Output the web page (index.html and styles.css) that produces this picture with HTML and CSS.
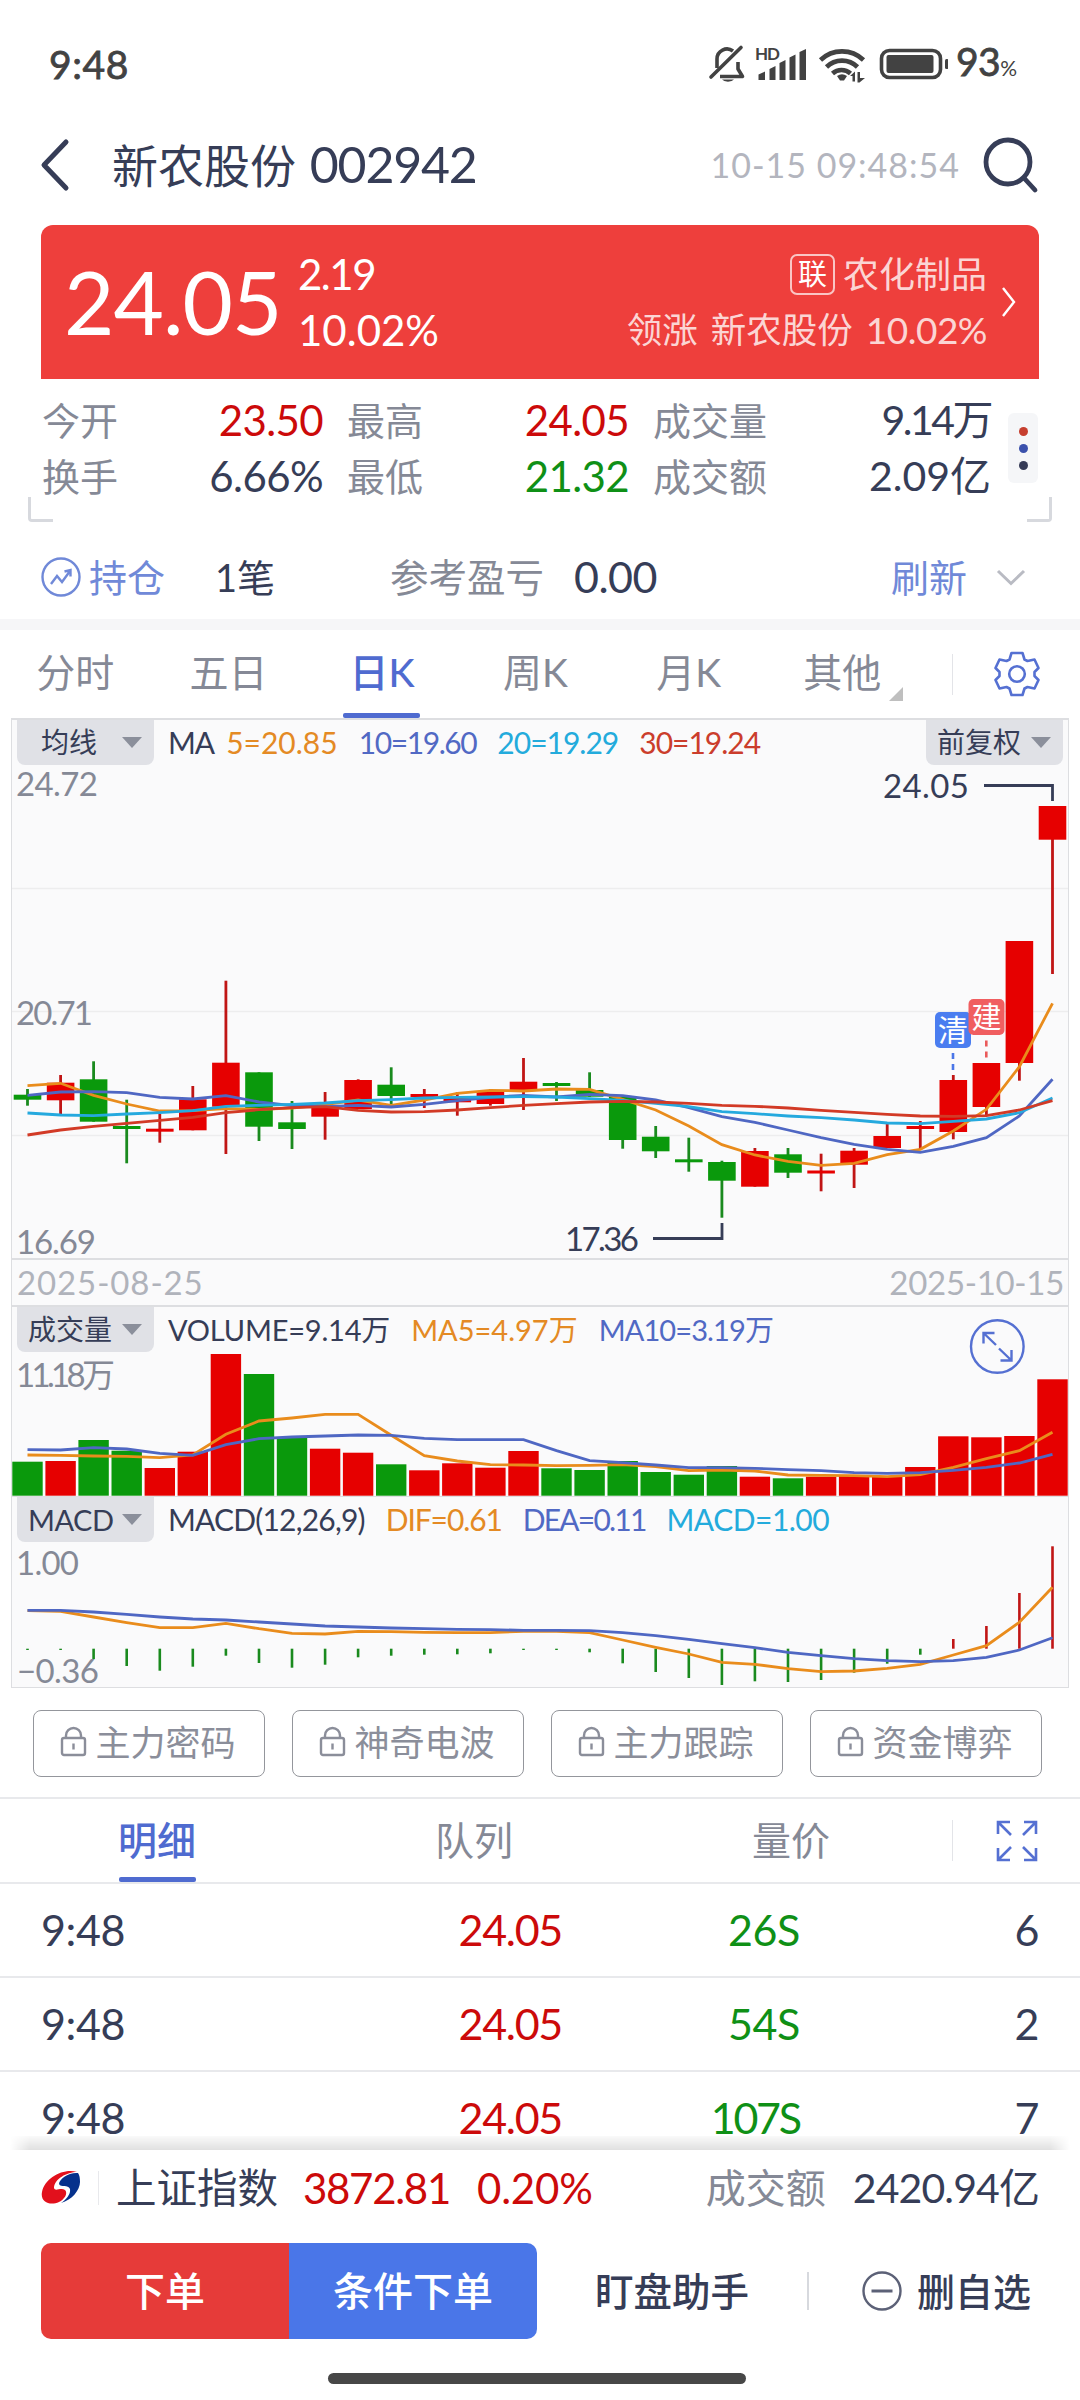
FILE: index.html
```html
<!DOCTYPE html>
<html lang="zh-CN">
<head>
    <meta charset="UTF-8">
    <meta name="viewport" content="width=device-width, initial-scale=1.0">
    <title>新农股份 002942</title>
    <link rel="stylesheet" href="styles.css">
</head>
<body>

<div class="status-bar">
    <span class="clock">9:48</span>
    <svg class="status-icons" width="240" height="44" viewBox="708 42 240 44">
        <g fill="none" stroke="#424242" stroke-width="3.6" stroke-linejoin="round">
            <path d="M717 68V59a10 10 0 0 1 16-8M738 62v7l4.500 7.500H720"/>
            <path d="M711 77L741 47.500" stroke-linecap="round"/>
        </g>
        <path d="M722 79.500h12a6.500 3.500 0 0 1-12 0z" fill="#424242"/>
        <text class="hd" x="755" y="60" textLength="25">HD</text>
        <path fill="#424242" d="M758.500 80v-5.500l6.500-3v8.500zM769.500 80V69l6-3v14zM779.500 80V63l6-3v20zM789.500 80V57.500l6-3V80zM799.500 80V52l6.500-3v31z"/>
        <g fill="none" stroke="#424242" stroke-width="4.600">
            <path d="M820.500 60a31 31 0 0 1 43 0"/>
            <path d="M826.500 67a22 22 0 0 1 31 0"/>
            <path d="M832.500 73.500a13.500 13.500 0 0 1 18 0"/>
        </g>
        <path d="M837 76q5-3.500 10 0l-3 4.500h-4z" fill="#424242"/>
        <path d="M850 76l5-4.500v10h-2.500V76zM857.500 72h2.500v6h5l-5.500 4.500-2 0z" fill="#424242"/>
        <rect x="881.500" y="50.500" width="59" height="27" rx="8" fill="none" stroke="#424242" stroke-width="3.600"/>
        <rect x="886.500" y="55" width="47" height="18" rx="2" fill="#424242"/>
        <rect x="945" y="59" width="3.500" height="10" rx="1.500" fill="#424242"/>
    </svg>
    <span class="battery">93<small>%</small></span>
</div>

<div class="header">
    <svg class="back" width="32" height="54" viewBox="0 0 32 54"><path d="M26 4L4 27L26 50" fill="none" stroke="#363d57" stroke-width="5" stroke-linecap="round" stroke-linejoin="round"/></svg>
    <h1>新农股份 <span>002942</span></h1>
    <span class="time">10-15 09:48:54</span>
    <svg class="search" width="58" height="58" viewBox="0 0 58 58" fill="none" stroke="#363d57" stroke-width="4.800" stroke-linecap="round"><circle cx="27" cy="26" r="22"/><path d="M43 42L54 54"/></svg>
</div>

<!-- 行情卡片 -->
<div class="quote">
    <div class="price">24.05</div>
    <div class="change">
        <div class="c1">2.19</div>
        <div>10.02%</div>
    </div>
    <div class="sector">
        <div class="line"><span class="tag">联</span>农化制品</div>
        <div class="line l2"><span>领涨</span><span>新农股份</span><span class="pct">10.02%</span></div>
    </div>
    <svg width="16" height="32" viewBox="0 0 16 32"><path d="M2 2L13 16L2 30" fill="none" stroke="#fff" stroke-width="2.400"/></svg>
</div>

<div class="stats">
    <div class="grid">
        <span>今开</span><b class="red">23.50</b><span>最高</span><b class="red">24.05</b><span>成交量</span><b class="n914">9.14万</b>
        <span>换手</span><b>6.66%</b><span>最低</span><b class="green">21.32</b><span>成交额</span><b>2.09亿</b>
    </div>
    <div class="dots"><i></i><i></i><i></i></div>
</div>
<div class="brackets"><i></i><i></i></div>

<div class="position">
    <svg width="40" height="40" viewBox="0 0 40 40" fill="none" stroke="#7089d8" stroke-width="2.400"><circle cx="20" cy="20" r="18.500"/><path d="M10 27l6-8 5 6 8-11M23.500 14.500l6-1.500v6.500"/></svg>
    <span class="blue">持仓</span>
    <span class="count">1笔</span>
    <span class="label">参考盈亏</span>
    <span class="num">0.00</span>
    <span class="blue refresh">刷新</span>
    <svg width="30" height="18" viewBox="0 0 30 18"><path d="M2 3L15 15.500L28 3" fill="none" stroke="#b9bbc3" stroke-width="3"/></svg>
</div>

<div class="tabs">
    <div class="tab">分时</div>
    <div class="tab">五日</div>
    <div class="tab active">日K</div>
    <div class="tab">周K</div>
    <div class="tab">月K</div>
    <div class="tab more">其他</div>
    <div class="tool">
        <svg width="48" height="48" viewBox="-24 -24 48 48" fill="none" stroke="#5570d2" stroke-width="2.600" stroke-linejoin="round"><circle r="7.800"/><path d="M-5.500 -21H5.500L7.500 -14.500L10.500 -13L17.500 -14.500L21.500 -6L17.500 -2V2L21.500 6L17.500 14.500L10.500 13L7.500 14.500L5.500 21H-5.500L-7.500 14.500L-10.500 13L-17.500 14.500L-21.500 6L-17.500 2V-2L-21.500 -6L-17.500 -14.500L-10.500 -13L-7.500 -14.500Z"/></svg>
    </div>
</div>

<!-- K线 / 成交量 / MACD -->
<div class="chart">
    <div class="pane k-pane">
        <svg id="kline" viewBox="12 720 1056 538"></svg>
        <div class="bar">
            <div class="pill">均线</div>
            <div class="legend ma"><span>MA</span><span class="c5">5=20.85</span><span class="c10">10=19.60</span><span class="c20">20=19.29</span><span class="c30">30=19.24</span></div>
            <div class="pill right">前复权</div>
        </div>
    </div>
    <div class="dates"><span>2025-08-25</span><span class="end">2025-10-15</span></div>
    <div class="pane v-pane">
        <svg id="volume" viewBox="12 1307 1056 190"></svg>
        <div class="bar">
            <div class="pill">成交量</div>
            <div class="legend vol"><span>VOLUME=9.14万</span><span class="c5">MA5=4.97万</span><span class="c10">MA10=3.19万</span></div>
        </div>
    </div>
    <div class="pane m-pane">
        <svg id="macd" viewBox="12 1497 1056 190"></svg>
        <div class="bar">
            <div class="pill latin">MACD</div>
            <div class="legend macd"><span>MACD(12,26,9)</span><span class="c5">DIF=0.61</span><span class="c10">DEA=0.11</span><span class="c20">MACD=1.00</span></div>
        </div>
    </div>
</div>

<svg width="0" height="0" class="defs">
    <symbol id="lock" viewBox="0 0 28 32"><g fill="none" stroke="#8b8e9a" stroke-width="2.400"><rect x="2" y="12" width="23" height="17" rx="2"/><path d="M6 12V9.500a7.500 7.500 0 0 1 15 0V12M13.500 17.500v6"/></g></symbol>
</svg>
<div class="locks">
    <div class="lock"><svg><use href="#lock"/></svg>主力密码</div>
    <div class="lock"><svg><use href="#lock"/></svg>神奇电波</div>
    <div class="lock"><svg><use href="#lock"/></svg>主力跟踪</div>
    <div class="lock"><svg><use href="#lock"/></svg>资金博弈</div>
</div>

<div class="tabs detail-tabs">
    <div class="tab active">明细</div>
    <div class="tab">队列</div>
    <div class="tab">量价</div>
    <div class="tool">
        <svg width="42" height="42" viewBox="0 0 42 42" fill="none" stroke="#5570d2" stroke-width="2.600"><path d="M2 14V2h12M2 2l13 13M28 2h12v12M40 2L27 15M2 28v12h12M2 40l13-13M40 28v12H28M40 40L27 27"/></svg>
    </div>
</div>

<div class="ticks">
    <div class="tick"><span>9:48</span><span class="red">24.05</span><span class="green">26S</span><span>6</span></div>
    <div class="tick"><span>9:48</span><span class="red">24.05</span><span class="green">54S</span><span>2</span></div>
    <div class="tick"><span>9:48</span><span class="red">24.05</span><span class="green n107">107S</span><span>7</span></div>
</div>

<div class="footer">
    <div class="index">
        <svg width="40" height="36" viewBox="0 0 40 36">
            <path d="M36 2C22-2 4 8 1 22C-1 32 9 36 18 32C24 29 27 23 24 20C20 17 14 22 13 18C13 9 26 2 36 2Z" fill="#e2101c"/>
            <path d="M37 3C28 2 18 9 18 14C20 18 27 14 29 19C30 24 25 30 20 33C31 30 39 20 39 12C39 8 38.500 5 37 3Z" fill="#06318c"/>
        </svg>
        <span class="name">上证指数</span>
        <span class="red idx">3872.81</span>
        <span class="red rate">0.20%</span>
        <span class="label">成交额</span>
        <span class="amount">2420.94亿</span>
    </div>
    <div class="actions">
        <button class="buy">下单</button>
        <button class="cond">条件下单</button>
        <span class="helper">盯盘助手</span>
        <span class="remove"><svg width="40" height="40" viewBox="0 0 40 40" fill="none" stroke="#5c6177" stroke-width="2.400"><circle cx="20" cy="20" r="18.500"/><path d="M9.500 20h21" stroke-width="3"/></svg>删自选</span>
    </div>
    <div class="home"></div>
</div>

<script src="script.js"></script>
</body>
</html>
```

FILE: styles.css
```css
* {
    box-sizing: border-box;
    margin: 0;
    padding: 0;
}

body {
    width: 1080px;
    height: 2400px;
    overflow: hidden;
    display: flex;
    flex-direction: column;
    background-color: #ffffff;
    font-family: Lato, "Noto Sans CJK SC", sans-serif;
    font-size: 38px;
    line-height: 56px;
    color: #363d57;
    white-space: nowrap;
}

svg {
    display: block;
    flex: none;
}

.red {
    color: #cc0a0a;
}

.green {
    color: #0f9016;
}

/* 状态栏 */
.status-bar {
    height: 128px;
    padding: 0 61px 0 49px;
    display: flex;
    align-items: center;
    color: #424242;
}

.clock {
    font-size: 39px;
    letter-spacing: 0.6px;
    -webkit-text-stroke: 0.8px #424242;
}

.status-icons {
    margin-left: auto;
}

.hd {
    font: bold 17px Lato, sans-serif;
    fill: #424242;
}

.battery {
    width: 63px;
    margin-left: 8px;
    font-size: 39px;
    letter-spacing: -0.5px;
    -webkit-text-stroke: 0.8px #424242;
}

.battery small {
    font-size: 21px;
    -webkit-text-stroke: 0;
}

/* 标题栏 */
.header {
    height: 74px;
    padding: 0 41px 0 40px;
    display: flex;
    align-items: center;
}

.header h1 {
    margin-left: 40px;
    font-size: 46px;
    font-weight: 400;
}

.header h1 span {
    font-size: 50px;
    letter-spacing: -1.2px;
    margin-left: 2px;
}

.header .time {
    margin-left: auto;
    font-size: 34px;
    letter-spacing: 1px;
    color: #b3b5be;
}

.header .search {
    margin-left: 21px;
}

/* 行情卡片 */
.quote {
    margin: 23px 41px 0;
    height: 154px;
    padding: 0 22px 0 23px;
    display: flex;
    align-items: center;
    border-radius: 12px 12px 0 0;
    background-color: #ee3f3c;
    color: #ffffff;
}

.price {
    width: 234px;
    font-size: 87px;
    line-height: 100px;
    letter-spacing: -1px;
}

.change {
    font-size: 42px;
}

.change .c1 {
    letter-spacing: -1.5px;
}

.sector {
    margin-left: auto;
    margin-right: 14px;
    font-size: 36px;
    color: rgba(255, 255, 255, 0.8);
}

.line {
    display: flex;
    justify-content: flex-end;
    align-items: center;
    height: 56px;
}

.l2 {
    gap: 13px;
    font-size: 35.500px;
}

.pct {
    font-size: 37px;
    letter-spacing: -0.5px;
}

.tag {
    width: 45px;
    height: 41px;
    margin-right: 8px;
    border: 2px solid #fac5c4;
    border-radius: 7px;
    font-size: 29px;
    line-height: 36px;
    text-align: center;
    color: #ffffff;
}

/* 指标 */
.stats {
    padding: 13px 42px 0;
    height: 118px;
    display: flex;
}

.grid {
    display: grid;
    grid-template-columns: 120px 161px 144px 162px 129px 233px;
    grid-auto-rows: 56px;
    color: #858996;
}

.grid b {
    font-size: 42px;
    font-weight: 400;
    letter-spacing: -0.600px;
    color: #363d57;
    text-align: right;
}

.grid span:nth-child(6n + 3),
.grid span:nth-child(6n + 5) {
    padding-left: 24px;
}

.grid b:nth-child(6n) {
    font-size: 41px;
    letter-spacing: 0;
}

.grid .red {
    color: #cc0a0a;
}

.grid .green {
    color: #0f9016;
}

.grid b.n914 {
    letter-spacing: -2.500px;
    padding-right: 0;
}

.dots {
    width: 30px;
    height: 70px;
    margin-top: 21px;
    margin-left: 17px;
    display: flex;
    flex-direction: column;
    align-items: center;
    justify-content: center;
    gap: 8px;
    border-radius: 6px;
    background-color: #f5f6f8;
}

.dots i {
    width: 9px;
    height: 9px;
    border-radius: 50%;
    background-color: #c63f2f;
}

.dots i:nth-child(2) {
    background-color: #3b51ac;
}

.dots i:nth-child(3) {
    background-color: #363b57;
}

.brackets {
    display: flex;
    justify-content: space-between;
    padding: 0 28px;
}

.brackets i {
    width: 25px;
    height: 25px;
    border: 3px solid #d7d9de;
    border-top: 0;
    border-right: 0;
    border-bottom-left-radius: 4px;
}

.brackets i:last-child {
    transform: scaleX(-1);
}

/* 持仓 */
.position {
    height: 108px;
    padding: 12px 54px 0 41px;
    display: flex;
    align-items: center;
    border-bottom: 11px solid #f6f6f8;
}

.position .blue {
    color: #7089d8;
    margin-left: 8px;
}

.position .count {
    width: 175px;
    margin-left: 50px;
}

.position .label {
    font-size: 38.500px;
    color: #858996;
}

.position .num {
    margin-left: 30px;
    font-size: 43px;
    letter-spacing: -0.5px;
}

.position .refresh {
    margin-left: auto;
    margin-right: 29px;
}

/* 周期切换 */
.tabs {
    position: relative;
    height: 88px;
    display: flex;
    line-height: 85px;
    font-size: 39px;
    color: #858996;
}

.tab {
    width: 153.400px;
    padding-right: 3px;
    text-align: center;
    position: relative;
}

.tab.active {
    color: #4f6bd0;
    font-weight: 500;
}

.tab.active::after {
    content: "";
    position: absolute;
    left: 50%;
    bottom: 0;
    width: 77px;
    height: 5px;
    margin-left: -40px;
    border-radius: 2px;
    background-color: #4f6bd0;
}

.tab.more::after {
    content: "";
    position: absolute;
    right: 17px;
    bottom: 17px;
    border-left: 14px solid transparent;
    border-bottom: 14px solid #bfbfbf;
}

.tool {
    flex: 1;
    display: flex;
    align-items: center;
    justify-content: flex-end;
    padding-right: 39px;
}

.tool::before {
    content: "";
    width: 1px;
    height: 41px;
    margin-right: 40px;
    background-color: #e3e4e8;
}

/* 图表 */
.chart {
    margin: 0 11px;
    border: 1px solid #dddee1;
    border-top: 2px solid #dddee1;
    background-color: #fafafb;
}

.pane {
    position: relative;
}

.pane > svg {
    position: absolute;
    left: 0;
    top: 0;
    width: 100%;
    height: 100%;
    overflow: visible;
}

.k-pane {
    height: 538px;
}

.v-pane,
.m-pane {
    height: 190px;
}

.bar {
    position: relative;
    height: 45px;
    padding: 0 5px;
    display: flex;
}

.pill {
    width: 137px;
    padding: 0 12px 0 11px;
    display: flex;
    align-items: center;
    justify-content: space-between;
    border-radius: 0 0 8px 8px;
    background-color: #e0e1e6;
    font-size: 28px;
    line-height: 43px;
}

.k-pane .pill:first-child {
    padding-left: 24px;
}

.pill.latin {
    font-size: 29px;
    letter-spacing: -0.500px;
}

.pill::after {
    content: "";
    border: 10.500px solid transparent;
    border-top: 11px solid #8b8f9b;
    border-bottom: 0;
}

.pill.right {
    margin-left: auto;
}

.legend {
    display: flex;
    gap: 21px;
    margin-left: 14px;
    line-height: 45px;
    font-size: 30px;
}

.legend.ma {
    line-height: 44px;
}

.legend.ma span:first-child {
    letter-spacing: -1px;
    margin-right: -9px;
}

.ma .c10 {
    letter-spacing: -1.400px;
}

.ma .c20,
.ma .c30 {
    letter-spacing: -1px;
}

.legend.vol {
    font-size: 29px;
    letter-spacing: -0.200px;
}

.vol .c5 {
    letter-spacing: 0;
}

.vol .c10 {
    letter-spacing: -0.900px;
}

.legend.macd {
    letter-spacing: -0.800px;
}

.macd .c5 {
    letter-spacing: -1.100px;
}

.macd .c10 {
    letter-spacing: -1.800px;
}

.macd .c20 {
    letter-spacing: -0.500px;
}

.c5 {
    color: #e48a24;
}

.c10 {
    color: #5169c4;
}

.c20 {
    color: #23abdc;
}

.c30 {
    color: #cb3d2c;
}

.dates {
    height: 49px;
    padding: 0 4px 0 5px;
    display: flex;
    justify-content: space-between;
    border-top: 2px solid #dddee1;
    border-bottom: 2px solid #dddee1;
    font-size: 33px;
    line-height: 45px;
    letter-spacing: 0.900px;
    color: #b0b3bb;
}

.dates .end {
    letter-spacing: -0.300px;
}

.axis {
    font-size: 33px;
    fill: #858996;
}

.mark {
    font-size: 33px;
    fill: #363d57;
}

.badge {
    font-size: 30px;
    fill: #ffffff;
    text-anchor: middle;
}

/* 主力工具 */
.defs {
    position: absolute;
}

.locks {
    height: 111px;
    padding: 22px 38px 0 33px;
    display: flex;
    justify-content: space-between;
    border-bottom: 2px solid #e8e9ec;
}

.lock {
    width: 232px;
    height: 67px;
    padding: 0 2px 3px 0;
    display: flex;
    align-items: center;
    justify-content: center;
    gap: 7px;
    border: 1.500px solid #94969c;
    border-radius: 8px;
    font-size: 35px;
    color: #8b8e9a;
}

.lock svg {
    width: 28px;
    height: 32px;
}

/* 成交明细 */
.detail-tabs {
    height: 85px;
    line-height: 82px;
    border-bottom: 2px solid #e8e9ec;
}

.detail-tabs .tab {
    width: 317px;
}

.detail-tabs .tool {
    padding-right: 42px;
}

.detail-tabs .tool::before {
    margin-right: 43px;
}

.tick {
    height: 94px;
    padding: 0 41px;
    display: grid;
    grid-template-columns: 260px 261px 238px 1fr;
    align-items: center;
    border-bottom: 2px solid #e8e9ec;
    font-size: 43px;
    letter-spacing: -0.400px;
}

.tick .red {
    letter-spacing: -1.300px;
}

.tick .n107 {
    letter-spacing: -2.200px;
}

.tick span + span {
    text-align: right;
}

/* 底部 */
.footer {
    position: absolute;
    top: 2150px;
    width: 1080px;
    height: 250px;
    background-color: #ffffff;
}

.footer::before {
    content: "";
    position: absolute;
    left: 10px;
    right: 10px;
    top: -14px;
    height: 14px;
    background: linear-gradient(rgba(0, 0, 0, 0.02), rgba(0, 0, 0, 0.12));
    -webkit-mask-image: linear-gradient(to right, transparent, #000 20px, #000 1040px, transparent);
    mask-image: linear-gradient(to right, transparent, #000 20px, #000 1040px, transparent);
}

.index {
    height: 76px;
    padding: 0 41px;
    display: flex;
    align-items: center;
    font-size: 42px;
}

.index .name {
    margin-left: 17px;
    padding-left: 17px;
    border-left: 1px solid #e8e9ec;
    font-size: 40.500px;
    line-height: 34px;
}

.index .idx {
    margin-left: 25px;
    letter-spacing: -1.300px;
}

.index .rate {
    margin-left: 27px;
    letter-spacing: -0.200px;
}

.index .label {
    margin-left: auto;
    font-size: 40px;
    color: #858996;
}

.index .amount {
    margin-left: 27px;
    font-size: 41px;
    letter-spacing: -0.900px;
}

.actions {
    margin-top: 17px;
    padding: 0 49px 0 41px;
    height: 96px;
    display: flex;
    align-items: center;
}

.actions button {
    flex: none;
    width: 248px;
    height: 96px;
    padding-bottom: 5px;
    border: none;
    border-radius: 10px 0 0 10px;
    background-color: #e63b39;
    color: #ffffff;
    font: 500 40px Lato, "Noto Sans CJK SC", sans-serif;
}

.actions .cond {
    border-radius: 0 10px 10px 0;
    background-color: #4a76e8;
}

.helper {
    width: 214px;
    margin-left: 58px;
    line-height: 38px;
    font-size: 38.500px;
    border-right: 2px solid #d7d9de;
}

.actions .helper,
.remove {
    font-weight: 500;
}

.remove {
    margin-left: auto;
    display: flex;
    align-items: center;
    gap: 15px;
    line-height: 50px;
}

.home {
    width: 418px;
    height: 11px;
    margin: 34px 0 0 328px;
    border-radius: 6px;
    background-color: #474747;
}
```

FILE: script.js
```js
const STEP = 33.065;
const X0 = 27.5;
const RED = '#e60000';
const GREEN = '#0a990c';
const WICK_RED = '#c01515';
const WICK_GREEN = '#1a8a1e';

const kline = document.getElementById('kline');
const volume = document.getElementById('volume');
const macd = document.getElementById('macd');

// 颜色, 实体上, 实体下, 最高, 最低
const candles = [
    ['g', 1094.7, 1099.7, 1089, 1105.7], ['r', 1082.7, 1100.3, 1075, 1114],
    ['g', 1079.3, 1121.7, 1061.3, 1121.7], ['g', 1126, 1129, 1099.7, 1163.3],
    ['r', 1128.7, 1131.7, 1114, 1142.7], ['r', 1099.3, 1130.3, 1086, 1130.3],
    ['r', 1062.7, 1106.7, 980.7, 1154], ['g', 1072.3, 1126.7, 1072.3, 1141],
    ['g', 1122.3, 1129, 1101, 1149], ['r', 1107.3, 1116.7, 1092, 1139.7],
    ['r', 1080, 1109, 1079.3, 1109], ['g', 1084.7, 1096, 1067.3, 1105],
    ['r', 1094, 1097, 1089, 1108], ['r', 1096.7, 1102.3, 1092.3, 1115.7],
    ['r', 1091, 1104, 1089.3, 1105.7], ['r', 1081.7, 1090, 1058, 1110],
    ['g', 1083, 1086, 1082, 1101], ['g', 1090, 1096.7, 1072.3, 1096.7],
    ['g', 1096.7, 1140, 1096.7, 1148.7], ['g', 1136.7, 1151.3, 1126, 1158],
    ['g', 1159.3, 1162.3, 1137.7, 1171.7], ['g', 1162, 1180.7, 1160.7, 1217.7],
    ['r', 1151, 1186.7, 1148, 1186.7], ['g', 1154.3, 1172.7, 1148, 1178],
    ['r', 1170.5, 1173.5, 1153.7, 1191.3], ['r', 1150.7, 1164.7, 1148, 1188],
    ['r', 1136, 1148, 1123.3, 1148], ['r', 1126, 1129, 1121, 1150],
    ['r', 1080, 1132, 1075, 1139.3], ['r', 1063, 1107, 1063, 1116],
    ['r', 941, 1063, 941, 1080.7], ['r', 806, 839.7, 806, 974]
];

const ma5 = [1085.7, 1083.3, 1095.3, 1104, 1111, 1110.7, 1108.7, 1109.3, 1108, 1104.7, 1100, 1105.3, 1100, 1093.3, 1090.3, 1091, 1089, 1089.3, 1099.3, 1110, 1126, 1144.7, 1155, 1161.3, 1165.3, 1163.3, 1154.7, 1149.3, 1131, 1109.3, 1066.7, 1003.3];
const ma10 = [1095.3, 1092, 1091.7, 1092.7, 1097.3, 1099, 1095.7, 1102, 1105.7, 1106.7, 1105.3, 1107, 1104.3, 1100.7, 1097.3, 1095.3, 1097, 1094.3, 1095.7, 1100, 1107.7, 1116.7, 1122.3, 1130, 1137.7, 1144.3, 1149.3, 1152.3, 1146.3, 1137.7, 1116, 1079.3];
const ma20 = [1113, 1115, 1115.7, 1114, 1112.7, 1110.7, 1106.3, 1105.3, 1104.3, 1103, 1100.7, 1099.7, 1098, 1097.3, 1097, 1096.7, 1097, 1098.7, 1100.3, 1103.3, 1106.7, 1111.7, 1113.7, 1116, 1117.7, 1120, 1123, 1123.7, 1121.3, 1119, 1112.7, 1098];
const ma30 = [1135, 1130, 1126.3, 1123.3, 1120.3, 1117.3, 1112.7, 1109.7, 1107.7, 1106.7, 1110.3, 1112, 1111.7, 1110, 1107.7, 1105.3, 1103.7, 1102, 1101.3, 1102, 1103.3, 1105.3, 1106.3, 1108, 1110.3, 1112.3, 1114.3, 1116, 1116.3, 1115.7, 1110, 1100.7];

// 副图数据, 三分之一像素为单位
const vol = [665, 663, 600, 632, 684, 635, 342, 402, 592, 626, 638, 673, 691, 670, 683, 633, 685, 690, 663, 696, 704, 678, 710, 715, 710, 708, 710, 681, 589, 592, 588, 418];
const vma5 = [645, 646, 648, 649, 653, 645, 583, 543, 534, 523, 523, 586, 647, 663, 674, 675, 677, 676, 674, 680, 692, 690, 693, 705, 706, 707, 710, 704, 682, 656, 632, 577];
const vma10 = [629, 630, 623, 627, 640, 646, 614, 596, 591, 588, 585, 586, 595, 599, 599, 599, 632, 662, 668, 675, 683, 683, 685, 689, 692, 698, 700, 698, 691, 682, 669, 643];
const hist = [1230, 1230, 1257, 1278, 1292, 1280, 1247, 1269, 1283, 1274, 1252, 1247, 1244, 1243, 1240, 1230, 1230, 1237, 1270, 1296, 1314, 1335, 1324, 1326, 1320, 1298, 1271, 1244, 1197, 1158, 1059, 919];
const dif = [1112, 1114, 1131, 1148, 1163, 1163, 1150, 1166, 1180, 1182, 1174, 1175, 1177, 1178, 1178, 1174, 1174, 1178, 1200, 1222, 1242, 1267, 1273, 1286, 1295, 1293, 1285, 1273, 1245, 1217, 1147, 1042];
const dea = [1111, 1111, 1116, 1123, 1131, 1137, 1140, 1146, 1152, 1158, 1161, 1164, 1166, 1168, 1169, 1171, 1171, 1172, 1178, 1187, 1198, 1211, 1223, 1237, 1247, 1256, 1262, 1265, 1262, 1252, 1230, 1193];

const x = i => X0 + i * STEP;
const sub = v => 1240 + v / 3;

function rect(left, top, w, h, fill) {
    return `<rect x="${left.toFixed(1)}" y="${top.toFixed(1)}" width="${w}" height="${h.toFixed(1)}" fill="${fill}"/>`;
}

function line(values, color, y = v => v) {
    const points = values.map((v, i) => `${x(i).toFixed(1)},${y(v).toFixed(1)}`).join(' ');
    return `<polyline points="${points}" fill="none" stroke="${color}" stroke-width="2.8"/>`;
}

function label(cls, text, left, base, width) {
    return `<text class="${cls}" x="${left}" y="${base}" textLength="${width}">${text}</text>`;
}

// K线
let k = '';
[888.5, 1011.5, 1135.5].forEach(y => k += `<path d="M12 ${y}H1068" stroke="#ededee" stroke-width="1.4"/>`);
k += label('axis', '24.72', 16, 796, 82) + label('axis', '20.71', 16, 1025, 77) + label('axis', '16.69', 16, 1254, 80);
candles.forEach(([c, top, bottom, high, low], i) => {
    k += rect(x(i) - 1.4, high, 2.8, low - high, c === 'r' ? WICK_RED : WICK_GREEN);
    k += rect(x(i) - 13.8, top, 27.6, bottom - top, c === 'r' ? RED : GREEN);
});
k += line(ma5, '#e98c1c') + line(ma10, '#4f67c3') + line(ma20, '#25a9de') + line(ma30, '#d23a26');
k += '<path d="M984 785.500H1052.500V801M653 1238.500H722V1223" fill="none" stroke="#363d57" stroke-width="2.800"/>';
k += label('mark', '24.05', 883, 798, 86) + label('mark', '17.36', 565, 1251, 74);
k += '<path d="M953 1053v17" stroke="#4a76e8" stroke-width="2.600" stroke-dasharray="6 5"/>';
k += '<path d="M986.300 1040.500v20" stroke="#ea5a5a" stroke-width="2.600" stroke-dasharray="6 5"/>';
k += '<rect x="935" y="1012" width="36" height="36" rx="5" fill="#4a7df0"/><text class="badge" x="953" y="1041">清</text>';
k += '<rect x="968.500" y="999" width="36" height="36" rx="5" fill="#f05e60"/><text class="badge" x="986.500" y="1028">建</text>';
kline.innerHTML = k;

// 成交量
let v = label('axis', '11.18万', 16, 1386.5, 99);
vol.forEach((h, i) => {
    v += rect(x(i) - 15.2, sub(h), 30.4, 1495.7 - sub(h), candles[i][0] === 'r' ? RED : GREEN);
});
v += '<path d="M12 1496.500H1068" stroke="#dddee1"/>';
v += line(vma5, '#e98c1c', sub) + line(vma10, '#4f67c3', sub);
v += '<g fill="none" stroke="#5570d2" stroke-width="2.400"><circle cx="997.300" cy="1346.500" r="26.300"/><path d="M983.500 1343.500V1333h11M983.500 1333l12.500 12M999 1348.500l12.500 12M1011.500 1350V1360.500h-11"/></g>';
volume.innerHTML = v;

// MACD
let m = label('axis', '1.00', 16, 1575, 63) + label('axis', '−0.36', 17, 1682.7, 82);
hist.forEach((h, i) => {
    const up = h < 1226;
    const top = Math.min(sub(h), 1648.7);
    m += rect(x(i) - 1.3, top, 2.6, Math.abs(sub(h) - 1648.7), up ? WICK_RED : WICK_GREEN);
});
m += line(dif, '#e98c1c', sub) + line(dea, '#4f67c3', sub);
macd.innerHTML = m;
```
